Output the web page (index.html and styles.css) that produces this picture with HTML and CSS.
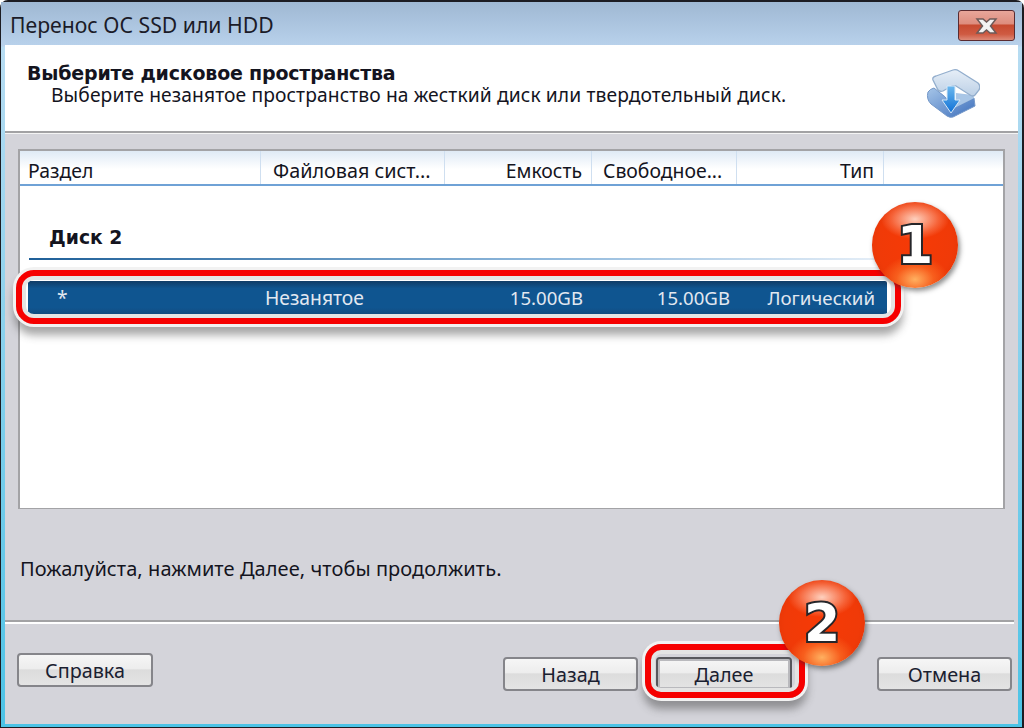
FILE: index.html
```html
<!DOCTYPE html>
<html lang="ru">
<head>
<meta charset="utf-8">
<title>Перенос ОС SSD или HDD</title>
<link rel="stylesheet" href="styles.css">
</head>
<body>
<div class="window">
  <div class="titlebar">
    <span class="title-text">Перенос ОС SSD или HDD</span>
    <button class="close" aria-label="Закрыть">
      <svg width="25" height="16" viewBox="0 0 25 16"><path d="M3 1h6l3.500 3L16 1h6l-5.500 7L22 15h-6l-3.500-3L9 15H3l5.500-7z" fill="#f2f2f2" stroke="#6d5a58" stroke-width="1.500"/></svg>
    </button>
  </div>
  <div class="client">
    <header class="head">
      <div class="head-text">
        <h1>Выберите дисковое пространства</h1>
        <p>Выберите незанятое пространство на жесткий диск или твердотельный диск.</p>
      </div>
      <svg class="head-icon" width="54" height="52" viewBox="0 0 54 52">
        <defs>
          <linearGradient id="lid" x1="0" y1="0" x2="0" y2="1"><stop offset="0" stop-color="#e6eef7"/><stop offset="1" stop-color="#bcd0e6"/></linearGradient>
          <linearGradient id="base" x1="0" y1="0" x2="1" y2="1"><stop offset="0" stop-color="#a6c5e8"/><stop offset="1" stop-color="#3d6fbc"/></linearGradient>
          <linearGradient id="arrow" x1="0" y1="0" x2="0" y2="1"><stop offset="0" stop-color="#6bb8ee"/><stop offset="1" stop-color="#0f70d6"/></linearGradient>
        </defs>
        <path d="M2 24Q4 21 8 20L13 24Q20 28 24 36L26 41 48 30 49 38 27 49Q24 50 21 48L5 36Q0 31 2 24Z" fill="url(#base)" stroke="#7397c8"/>
        <path d="M30 25 47 27 48 30 30 39Z" fill="#a9c6e6"/>
        <path d="M7 12Q6 9 10 8L27 2Q30 1 33 3L52 15Q55 18 53 22L49 27Q47 29 44 27L30 18Q28 17 24 19L17 23Q14 24 12 22Z" fill="url(#lid)" stroke="#93aecd" stroke-width="1.300"/>
        <path d="M21 18h8v14h5L25 45 16 32h5z" fill="url(#arrow)" stroke="#d6e8f8"/>
      </svg>
    </header>
    <main class="body">
      <section class="list">
        <div class="list-head">
          <span class="col col-1">Раздел</span>
          <span class="col col-2">Файловая сист...</span>
          <span class="col col-3">Емкость</span>
          <span class="col col-4">Свободное...</span>
          <span class="col col-5">Тип</span>
          <span class="col col-6"></span>
        </div>
        <div class="disk">Диск 2</div>
        <div class="disk-line"></div>
        <div class="row">
          <span class="cell cell-1">*</span>
          <span class="cell cell-2">Незанятое</span>
          <span class="cell cell-3">15.00GB</span>
          <span class="cell cell-4">15.00GB</span>
          <span class="cell cell-5">Логический</span>
        </div>
      </section>
      <p class="hint">Пожалуйста, нажмите Далее, чтобы продолжить.</p>
    </main>
    <footer class="foot">
      <button class="btn btn-help">Справка</button>
      <div class="foot-actions">
        <button class="btn">Назад</button>
        <button class="btn btn-next">Далее</button>
        <button class="btn">Отмена</button>
      </div>
    </footer>
  </div>
</div>
<div class="ring ring-1"></div>
<div class="ring ring-2"></div>
<div class="badge badge-1"><span>1</span></div>
<div class="badge badge-2"><span>2</span></div>
</body>
</html>
```
FILE: styles.css
```css
* { box-sizing: border-box; }
html, body { margin: 0; padding: 0; }
body {
  position: relative;
  width: 1024px;
  height: 728px;
  overflow: hidden;
  background: #fff;
  font-family: "Noto Sans", "DejaVu Sans", sans-serif;
  color: #14141e;
}
.window {
  height: 728px;
  display: flex;
  flex-direction: column;
  padding: 0 4px 3px 4px;
  border: 1px solid #1c1c22;
  border-width: 2px 2px 1px 1px;
  border-radius: 8px 8px 0 0;
  background: linear-gradient(#9fb7d2 0, #b9d2ec 44px, #b7dcf2 45px, #4cc3e6 100%);
}
.titlebar {
  flex: none;
  height: 43px;
  display: flex;
  align-items: flex-start;
  justify-content: space-between;
  background: linear-gradient(#9fb8d3, #b8d1eb);
  margin: 0 -4px;
  padding: 0 4px 0 9px;
}
.title-text {
  font-size: 21.200px;
  line-height: 24px;
  margin-top: 11px;
  color: #1b1b28;
}
.close {
  width: 57px;
  height: 31px;
  margin-top: 8px;
  margin-right: 3px;
  padding: 0;
  display: flex;
  align-items: center;
  justify-content: center;
  border: 1px solid #5a2b30;
  border-radius: 3px;
  background: linear-gradient(#e8a69a 0, #dd8d7e 45%, #c64a30 48%, #cf5a42 80%, #dd8a78 100%);
}
.client {
  flex: 1;
  min-height: 0;
  display: flex;
  flex-direction: column;
  background: #d4d4da;
}
.head {
  flex: none;
  height: 88px;
  display: flex;
  justify-content: space-between;
  align-items: flex-start;
  background: #fff;
  border-bottom: 2px solid #a2a2a4;
  padding: 0 38px 0 22px;
}
.head-text h1 {
  margin: 17px 0 0;
  font-size: 19px;
  line-height: 22px;
  font-weight: 700;
  font-family: "DejaVu Sans", sans-serif;
  letter-spacing: -.2px;
}
.head-text p {
  margin: 0 0 0 24px;
  font-size: 19.250px;
  line-height: 22px;
  letter-spacing: .1px;
}
.head-icon { margin-top: 23px; }
.body {
  flex: 1;
  min-height: 0;
  padding: 15px 13px 0 13px;
  display: flex;
  flex-direction: column;
  border-top: 1px solid #f4f4f4;
}
.list {
  height: 360px;
  background: #fff;
  border: 2px solid #a3a3a6;
  border-bottom-width: 1px;
}
.list-head {
  display: flex;
  height: 35px;
  background: linear-gradient(#dfeaf5 0, #fff 55%);
  border-bottom: 2px solid #6fa2d6;
}
.col {
  font-size: 19.400px;
  line-height: 22px;
  padding-top: 9px;
  border-right: 1px solid #cfdff0;
  white-space: nowrap;
  overflow: hidden;
}
.col-1 { width: 241px; padding-left: 8px; }
.col-2 { width: 184px; padding-left: 12px; font-size: 19.800px; }
.col-3 { width: 147px; padding-right: 9px; text-align: right; }
.col-4 { width: 145px; padding-left: 11px; }
.col-5 { width: 147px; padding-right: 9px; text-align: right; }
.col-6 { flex: 1; border-right: 0; }
.disk {
  margin: 41px 0 0 29px;
  font-family: "DejaVu Sans", sans-serif;
  font-weight: 700;
  font-size: 18.800px;
  line-height: 22px;
}
.disk-line {
  height: 2px;
  margin: 9px 118px 0 9px;
  background: linear-gradient(90deg, #1e5f98, #8fb8dc 60%, #e6eff8);
}
.row {
  position: relative;
  display: flex;
  margin: 21px 116px 0 8px;
  height: 34px;
  align-items: center;
  background: linear-gradient(#103c66 0, #0f5590 22%, #0f5590 78%, #124a7c 100%);
  color: #e2e8f0;
  font-size: 19.300px;
  line-height: 22px;
  border-radius: 2px;
}
.cell { white-space: nowrap; }
.cell-1 { width: 237px; padding-left: 29px; }
.cell-2 { width: 173px; }
.cell-3 { width: 145px; text-align: right; font-size: 18.600px; }
.cell-4 { width: 147px; text-align: right; font-size: 18.600px; }
.cell-5 { width: 145px; text-align: right; font-size: 18.700px; }
.hint {
  margin: 49px 0 0 2px;
  font-size: 20px;
  line-height: 22px;
  letter-spacing: .07px;
}
.foot {
  flex: none;
  height: 104px;
  margin: 0 4px 0 0;
  border-top: 2px solid #a2a2a4;
  box-shadow: inset 0 2px 0 #fff;
  padding: 0 2px 0 12px;
  display: flex;
  justify-content: space-between;
  align-items: flex-start;
}
.foot-actions {
  display: flex;
  gap: 18px;
  margin-top: 35px;
}
.foot-actions .btn-next { margin-right: 67px; }
.btn {
  width: 135px;
  height: 34px;
  padding: 0;
  border: 2px solid #85858a;
  border-radius: 4px;
  background: linear-gradient(#f6f6f6 0, #ededed 45%, #dcdcdc 50%, #e4e4e4 100%);
  font: inherit;
  font-size: 19.800px;
  color: #1a2030;
}
.btn-help { margin-top: 31px; width: 136px; }
.btn-next {
  width: 136px;
  border-color: #57575c;
  box-shadow: inset 0 0 0 2px #b9b9bd;
}
.ring {
  position: absolute;
  border: 6px solid #f60000;
  box-shadow: 0 0 0 3px #f2f2f2, inset 0 0 0 4px #e4e4e4, 0 9px 9px 2px rgba(60, 60, 60, .45);
}
.ring-1 { left: 16px; top: 270px; width: 885px; height: 54px; border-radius: 18px; }
.ring-2 { left: 645px; top: 644px; width: 160px; height: 54px; border-radius: 16px; }
.badge {
  position: absolute;
  width: 86px;
  height: 86px;
  border-radius: 50%;
  display: flex;
  align-items: center;
  justify-content: center;
  background:
    radial-gradient(ellipse 34px 20px at 50% 20%, rgba(255, 225, 210, .9), rgba(255, 170, 140, .35) 70%, transparent 100%),
    radial-gradient(ellipse 34px 24px at 50% 90%, #ffb060 0, rgba(255, 130, 50, .5) 55%, transparent 100%),
    radial-gradient(circle at 50% 50%, #f63a06 0, #f03a08 62%, #d83206 100%);
  box-shadow: 2px 3px 5px rgba(50, 50, 50, .55);
}
.badge-1 { left: 872px; top: 202px; }
.badge-2 { left: 779px; top: 580px; }
.badge span {
  font-family: "DejaVu Sans", sans-serif;
  font-weight: 700;
  font-size: 52px;
  line-height: 1;
  color: #fff;
  -webkit-text-stroke: 4px #26262a;
  paint-order: stroke fill;
}
```
